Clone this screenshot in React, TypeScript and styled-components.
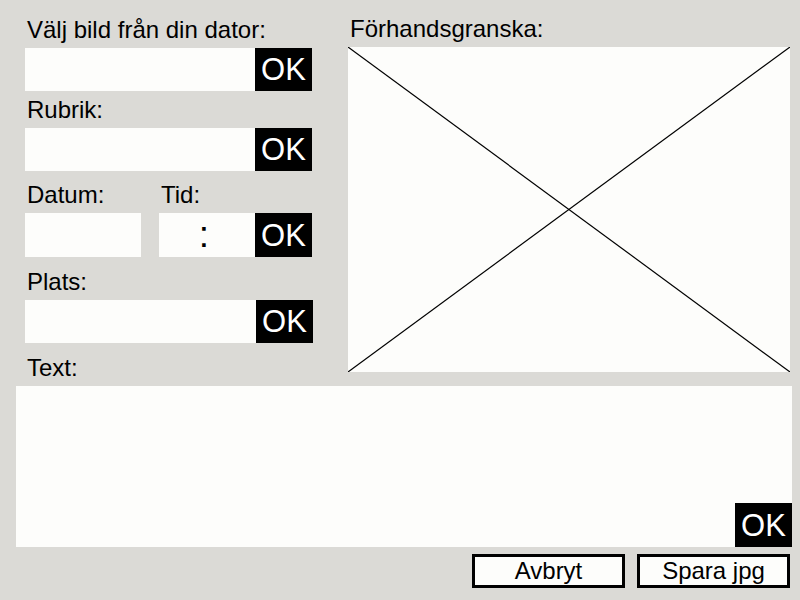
import React from 'react';
import styled, { createGlobalStyle } from 'styled-components';

const GlobalStyle = createGlobalStyle`
  html, body {
    margin: 0;
    padding: 0;
    background: #dbdad6;
  }
  body {
    font-family: "Liberation Sans", Arial, sans-serif;
    color: #000;
  }
`;

const App: React.FC = () => {
  return (
    <Page>
      <GlobalStyle />
      <Top>
        <LeftColumn>
          <Label $top={6}>Välj bild från din dator:</Label>
          <FieldRow>
            <Field $width={230} />
            <OkButton>OK</OkButton>
          </FieldRow>

          <Label $top={6}>Rubrik:</Label>
          <FieldRow>
            <Field $width={230} />
            <OkButton>OK</OkButton>
          </FieldRow>

          <DateTimeRow>
            <Group>
              <Label $top={11}>Datum:</Label>
              <Field $width={116} $height={44} />
            </Group>
            <Group>
              <Label $top={11}>Tid:</Label>
              <FieldRow>
                <TimeField>:</TimeField>
                <OkButton $height={44}>OK</OkButton>
              </FieldRow>
            </Group>
          </DateTimeRow>

          <Label $top={12}>Plats:</Label>
          <FieldRow>
            <Field $width={231} />
            <OkButton>OK</OkButton>
          </FieldRow>

          <Label $top={12}>Text:</Label>
        </LeftColumn>

        <RightColumn>
          <Label $top={5}>Förhandsgranska:</Label>
          <Preview>
            <svg width="100%" height="100%" viewBox="0 0 442 325" preserveAspectRatio="none">
              <line x1="0" y1="0" x2="442" y2="325" stroke="#000" strokeWidth="1.2" />
              <line x1="442" y1="0" x2="0" y2="325" stroke="#000" strokeWidth="1.2" />
            </svg>
          </Preview>
        </RightColumn>
      </Top>

      <TextArea>
        <OkButton $height={44}>OK</OkButton>
      </TextArea>

      <Actions>
        <ActionButton>Avbryt</ActionButton>
        <ActionButton>Spara jpg</ActionButton>
      </Actions>
    </Page>
  );
};

// component style
const Page = styled.div`
  width: 800px;
  height: 600px;
  box-sizing: border-box;
  padding: 11px 8px 0 16px;
  display: flex;
  flex-direction: column;
  overflow: hidden;
`;

const Top = styled.div`
  display: flex;
  align-items: flex-start;
`;

const LeftColumn = styled.div`
  display: flex;
  flex-direction: column;
  width: 288px;
  margin-left: 9px;
`;

const RightColumn = styled.div`
  display: flex;
  flex-direction: column;
  width: 442px;
  margin-left: 35px;
`;

const Label = styled.div<{ $top: number }>`
  font-size: 24px;
  line-height: 26px;
  padding: ${(p) => p.$top}px 0 5px 2px;
  white-space: nowrap;
`;

const FieldRow = styled.div`
  display: flex;
`;

const Field = styled.div<{ $width: number; $height?: number }>`
  width: ${(p) => p.$width}px;
  height: ${(p) => p.$height ?? 43}px;
  background: #fdfdfb;
`;

const TimeField = styled.div`
  width: 96px;
  height: 44px;
  background: #fdfdfb;
  display: flex;
  align-items: center;
  justify-content: center;
  padding-right: 6px;
  box-sizing: border-box;
  font-size: 37px;
  line-height: 44px;
`;

const OkButton = styled.div<{ $height?: number }>`
  width: 57px;
  height: ${(p) => p.$height ?? 43}px;
  background: #000;
  color: #fff;
  font-size: 31px;
  padding-top: 1px;
  box-sizing: border-box;
  display: flex;
  align-items: center;
  justify-content: center;
  flex-shrink: 0;
`;

const DateTimeRow = styled.div`
  display: flex;
  gap: 18px;
`;

const Group = styled.div`
  display: flex;
  flex-direction: column;
`;

const Preview = styled.div`
  height: 325px;
  background: #fdfdfb;

  svg {
    display: block;
  }
`;

const TextArea = styled.div`
  height: 161px;
  width: 776px;
  background: #fdfdfb;
  display: flex;
  align-items: flex-end;
  justify-content: flex-end;
`;

const Actions = styled.div`
  display: flex;
  justify-content: flex-end;
  gap: 12px;
  margin-top: 7px;
  padding-right: 2px;
`;

const ActionButton = styled.div`
  width: 153px;
  height: 34px;
  box-sizing: border-box;
  border: 3px solid #000;
  background: #fdfdfb;
  font-size: 24px;
  display: flex;
  align-items: center;
  justify-content: center;
`;

export default App;
